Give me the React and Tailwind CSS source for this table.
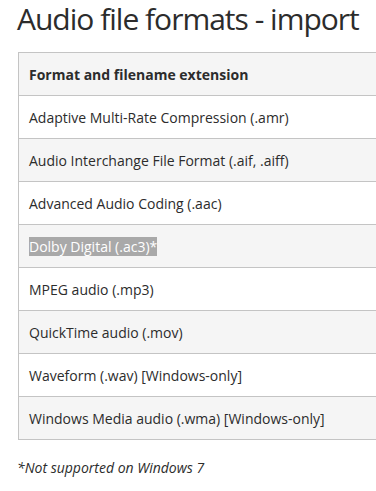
const formats = [
  'Adaptive Multi-Rate Compression (.amr)',
  'Audio Interchange File Format (.aif, .aiff)',
  'Advanced Audio Coding (.aac)',
  'Dolby Digital (.ac3)*',
  'MPEG audio (.mp3)',
  'QuickTime audio (.mov)',
  'Waveform (.wav) [Windows-only]',
  'Windows Media audio (.wma) [Windows-only]',
]

export default function App() {
  return (
    <div
      className="h-[491px] w-[376px] overflow-hidden bg-white text-[#2c2c2c]"
      style={{ fontFamily: '"Open Sans", "Noto Sans", sans-serif' }}
    >
      <h1 className="w-[376px] pl-[17px] text-[30px] leading-[38px] font-normal tracking-[-1px]">
        Audio file formats - import
      </h1>

      <table className="ml-[18px] mt-[14px] w-[380px] border-collapse text-[14px]">
        <thead>
          <tr className="h-[43px] bg-[#f5f5f5]">
            <th className="border border-[#c4c4c4] pl-[10px] text-left font-bold">
              Format and filename extension
            </th>
          </tr>
        </thead>
        <tbody>
          {formats.map((name, i) => (
            <tr key={name} className={`h-[43px] ${i % 2 ? 'bg-[#f5f5f5]' : 'bg-white'}`}>
              <td className="border border-[#c4c4c4] pl-[10px] whitespace-nowrap">
                {name.startsWith('Dolby') ? (
                  <span className="bg-[#a9a9a9] text-white">{name}</span>
                ) : (
                  name
                )}
              </td>
            </tr>
          ))}
        </tbody>
      </table>

      <p className="ml-[17px] mt-[17px] text-[14px] italic">*Not supported on Windows 7</p>
    </div>
  )
}
